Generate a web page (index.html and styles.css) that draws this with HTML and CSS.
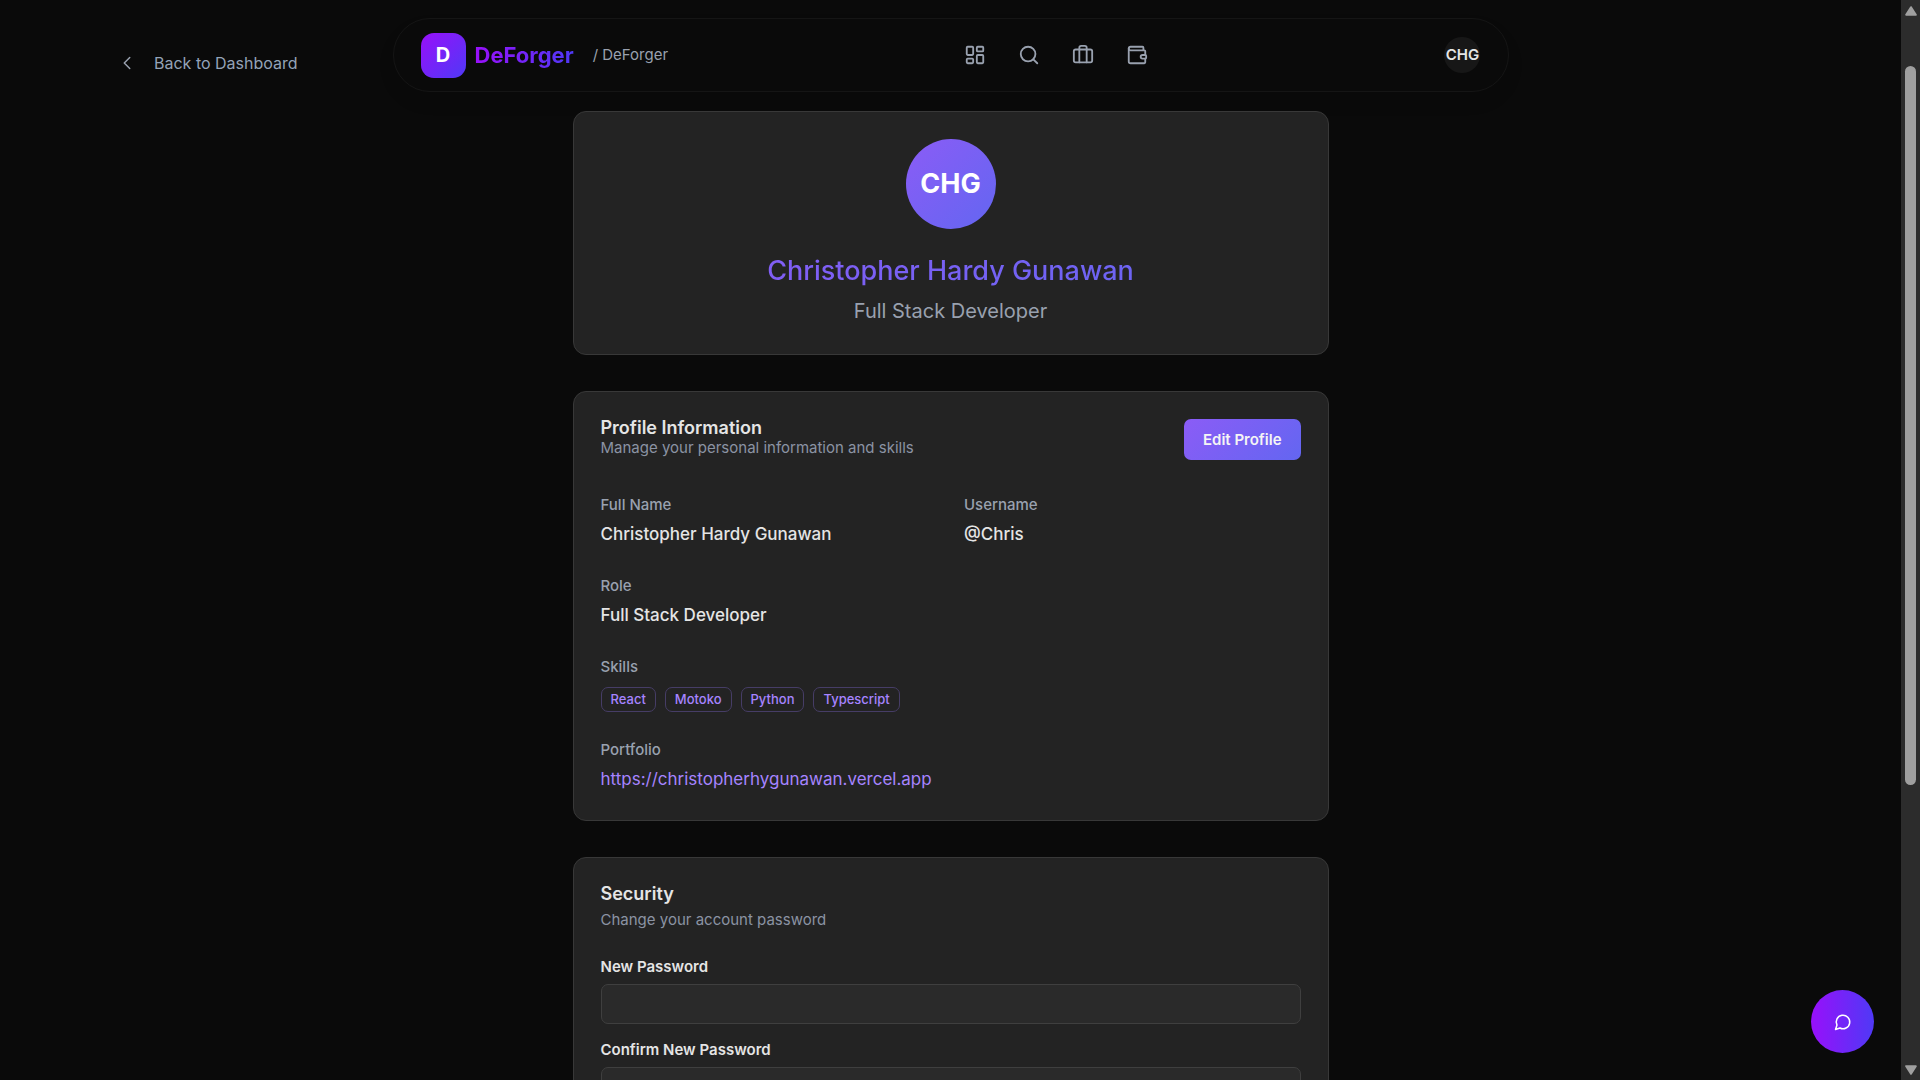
FILE: index.html
```html
<!DOCTYPE html>
<html lang="en">
<head>
  <meta charset="utf-8">
  <title>DeForger</title>
  <link rel="stylesheet" href="styles.css">
</head>
<body>
  <div class="page">
    <header class="top">
      <a class="back" href="#">
        <svg class="icon" viewBox="0 0 24 24"><path d="m15 18-6-6 6-6"/></svg>
        Back to Dashboard
      </a>
      <nav class="nav">
        <div class="brand">
          <span class="logo">D</span>
          <a class="brand-name" href="#">DeForger</a>
          <span class="crumb">/ DeForger</span>
        </div>
        <div class="nav-links">
          <a href="#" aria-label="Dashboard"><svg class="icon" viewBox="0 0 24 24"><rect width="7" height="9" x="3" y="3" rx="1"/><rect width="7" height="5" x="14" y="3" rx="1"/><rect width="7" height="9" x="14" y="12" rx="1"/><rect width="7" height="5" x="3" y="16" rx="1"/></svg></a>
          <a href="#" aria-label="Search"><svg class="icon" viewBox="0 0 24 24"><circle cx="11" cy="11" r="8"/><path d="m21 21-4.3-4.3"/></svg></a>
          <a href="#" aria-label="Projects"><svg class="icon" viewBox="0 0 24 24"><path d="M16 20V4a2 2 0 0 0-2-2h-4a2 2 0 0 0-2 2v16"/><rect width="20" height="14" x="2" y="6" rx="2"/></svg></a>
          <a href="#" aria-label="Wallet"><svg class="icon" viewBox="0 0 24 24"><path d="M19 7V4a1 1 0 0 0-1-1H5a2 2 0 0 0 0 4h15a1 1 0 0 1 1 1v4h-3a2 2 0 0 0 0 4h3a1 1 0 0 0 1-1v-2a1 1 0 0 0-1-1"/><path d="M3 5v14a2 2 0 0 0 2 2h15a1 1 0 0 0 1-1v-4"/></svg></a>
        </div>
        <button class="user" type="button">CHG</button>
      </nav>
    </header>

    <main class="content">
      <section class="card hero">
        <div class="avatar">CHG</div>
        <h1 class="name">Christopher Hardy Gunawan</h1>
        <p class="role">Full Stack Developer</p>
      </section>

      <section class="card">
        <div class="card-head">
          <div>
            <h2 class="card-title">Profile Information</h2>
            <p class="card-sub">Manage your personal information and skills</p>
          </div>
          <button class="edit" type="button">Edit Profile</button>
        </div>
        <dl class="fields">
          <div><dt>Full Name</dt><dd>Christopher Hardy Gunawan</dd></div>
          <div><dt>Username</dt><dd>@Chris</dd></div>
          <div class="wide"><dt>Role</dt><dd>Full Stack Developer</dd></div>
          <div class="wide">
            <dt>Skills</dt>
            <dd class="tags"><span class="tag">React</span><span class="tag">Motoko</span><span class="tag">Python</span><span class="tag">Typescript</span></dd>
          </div>
          <div class="wide"><dt>Portfolio</dt><dd><a class="link" href="#">https://christopherhygunawan.vercel.app</a></dd></div>
        </dl>
      </section>

      <section class="card">
        <h2 class="card-title">Security</h2>
        <p class="card-sub spaced">Change your account password</p>
        <form class="form">
          <div class="form-row">
            <label for="new-password">New Password</label>
            <input id="new-password" type="password">
          </div>
          <div class="form-row">
            <label for="confirm-password">Confirm New Password</label>
            <input id="confirm-password" type="password">
          </div>
        </form>
      </section>
    </main>
  </div>

  <button class="chat" type="button" aria-label="Open chat">
    <svg class="icon" viewBox="0 0 24 24"><path d="M7.9 20A9 9 0 1 0 4 16.1L2 22Z"/></svg>
  </button>

  <div class="scrollbar" aria-hidden="true">
    <svg class="arrow" viewBox="0 0 12 10"><path d="M6 1.2 10.8 8.8H1.2Z"/></svg>
    <div class="track"><div class="thumb"></div></div>
    <svg class="arrow" viewBox="0 0 12 10"><path d="M6 8.8 1.2 1.2H10.8Z"/></svg>
  </div>
</body>
</html>
```
FILE: styles.css
```css
* { box-sizing: border-box; }

body {
  margin: 0;
  height: 100vh;
  overflow: hidden;
  background: #0a0a0a;
  color: #e5e5e5;
  font: 400 15px/22px Inter, "Liberation Sans", sans-serif;
}

h1, h2, p, dl, dd { margin: 0; }
a { color: inherit; text-decoration: none; }
button, input { font: inherit; color: inherit; }
button { border: 0; padding: 0; cursor: pointer; }

.icon {
  display: block;
  width: 22px;
  height: 22px;
  fill: none;
  stroke: currentColor;
  stroke-width: 2;
  stroke-linecap: round;
  stroke-linejoin: round;
}

.page { padding: 18px 19px 0 0; }

/* Top bar */
.top {
  display: grid;
  grid-template-columns: 1fr minmax(0, 1116px) 1fr;
  margin-bottom: 19px;
}
.back {
  display: flex;
  align-items: center;
  gap: 16px;
  padding: 15px 0 0 116px;
  color: #94a3b8;
  font-size: 16px;
  white-space: nowrap;
}
.back .icon {
  color: #99a1af;
  stroke-width: 1.6;
}
.nav {
  display: flex;
  align-items: center;
  justify-content: space-between;
  height: 74px;
  padding: 0 27px;
  border: 1px solid #151515;
  border-radius: 37px;
  color: #99a1af;
  box-shadow: 0 10px 16px rgba(0, 0, 0, .1);
}
.brand { display: flex; align-items: center; }
.logo {
  display: grid;
  place-items: center;
  width: 45px;
  height: 45px;
  margin-right: 9px;
  border-radius: 13px;
  background: linear-gradient(135deg, #9810fa, #4f39f6);
  color: #fff;
  font-size: 20px;
  font-weight: 700;
}
.brand-name {
  margin-right: 19px;
  background: linear-gradient(90deg, #9810fa, #4f39f6);
  background-clip: text;
  color: transparent;
  font-size: 22px;
  font-weight: 700;
  line-height: 30px;
}
.nav-links { display: flex; gap: 32px; }
.user {
  display: grid;
  place-content: center;
  width: 36px;
  height: 36px;
  border-radius: 50%;
  background: #171717;
  color: #e5e5e5;
  font-weight: 600;
}

/* Cards */
.content {
  display: grid;
  gap: 36px;
  max-width: 756px;
  margin: 0 auto;
}
.card {
  padding: 27px;
  border: 1px solid #383838;
  border-radius: 13px;
  background: #232323;
}
.hero { text-align: center; }
.avatar {
  display: grid;
  place-items: center;
  width: 90px;
  height: 90px;
  margin: 0 auto 24px;
  border-radius: 50%;
  background: linear-gradient(135deg, #8b5cf6, #6366f1);
  color: #fff;
  font-size: 27px;
  font-weight: 700;
}
.name {
  margin-bottom: 6px;
  background: linear-gradient(135deg, #8b5cf6, #6366f1);
  background-clip: text;
  color: transparent;
  font-size: 27px;
  font-weight: 500;
  line-height: 36px;
}
.role {
  color: #99a1af;
  font-size: 20px;
  line-height: 32px;
}
.card-head {
  display: flex;
  justify-content: space-between;
  align-items: flex-start;
  margin-bottom: 34px;
}
.card-title {
  font-size: 18px;
  font-weight: 600;
  line-height: 18px;
}
.card-sub { color: #8b93a3; }
.spaced { margin: 6px 0 25px; }
.edit {
  height: 41px;
  padding: 0 19px;
  border-radius: 7px;
  background: linear-gradient(135deg, #8b5cf6, #6366f1);
  color: #f5f5f5;
  font-weight: 600;
}

.fields {
  display: grid;
  grid-template-columns: 1fr 1fr;
  gap: 27px;
}
.wide { grid-column: 1 / -1; }
dt {
  margin-bottom: 5px;
  color: #99a1af;
  font-weight: 500;
}
dd {
  font-size: 17px;
  font-weight: 500;
  line-height: 27px;
}
.tags {
  display: flex;
  gap: 9px;
  padding-top: 4px;
}
.tag {
  height: 25px;
  padding: 0 9px;
  border: 1px solid #463d66;
  border-radius: 7px;
  color: #a684ff;
  font-size: 13px;
  line-height: 22px;
}
.link {
  color: #a684ff;
  font-weight: 400;
}

.form { display: grid; gap: 15px; }
.form-row { display: grid; gap: 6px; }
.form-row label { font-weight: 600; }
.form-row input {
  width: 100%;
  height: 40px;
  padding: 0 14px;
  border: 1px solid #3f3f3f;
  border-radius: 7px;
  background: #2a2a2a;
}

/* Floating chat button */
.chat {
  position: fixed;
  right: 46px;
  bottom: 27px;
  display: grid;
  place-items: center;
  width: 63px;
  height: 63px;
  border-radius: 50%;
  background: linear-gradient(90deg, #9810fa, #4f39f6);
  color: #fff;
}
.chat .icon { width: 18px; height: 18px; }

/* Scrollbar */
.scrollbar {
  position: fixed;
  inset: 0 0 0 auto;
  display: flex;
  flex-direction: column;
  align-items: center;
  width: 19px;
  padding: 6px 0 5px;
  background: #2c2c2c;
}
.arrow {
  width: 12px;
  height: 10px;
  fill: #9f9f9f;
  stroke: #9f9f9f;
  stroke-width: 2;
  stroke-linejoin: round;
}
.track {
  flex: 1;
  padding-top: 50px;
}
.thumb {
  width: 11px;
  height: 72%;
  border-radius: 6px;
  background: #9f9f9f;
}
```
